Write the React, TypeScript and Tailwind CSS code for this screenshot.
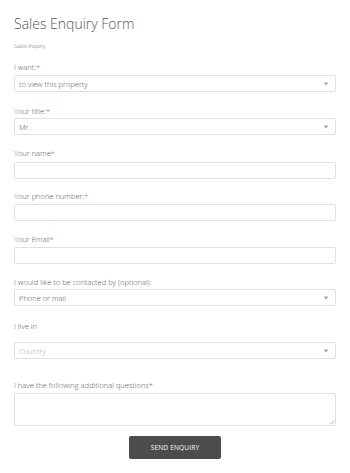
const Req = () => <span className="text-[#e0393e]">*</span>;

function Arrow() {
  return (
    <svg width="6" height="4" viewBox="0 0 6 4" className="shrink-0">
      <path d="M0.5 0.5 H5.5 L3 3.5 Z" fill="#a8a8a8" />
    </svg>
  );
}

function SelectBox({ value, placeholder }: { value: string; placeholder?: boolean }) {
  return (
    <div className="flex h-[17px] items-center justify-between rounded-[2px] border border-[#e0e0e0] bg-white pl-[4px] pr-[6px]">
      <span className={placeholder ? "text-[#ababab]" : "text-[#555]"}>{value}</span>
      <Arrow />
    </div>
  );
}

function InputBox() {
  return <div className="h-[17px] rounded-[2px] border border-[#e0e0e0] bg-white" />;
}

export default function App() {
  return (
    <div
      className="min-h-[473px] w-[350px] bg-white px-[14px] text-[7.5px] leading-[10px] text-[#555] font-light"
      style={{ fontFamily: '"Open Sans", "Liberation Sans", sans-serif' }}
    >
      <h1 className="pt-[14px] text-[14px] leading-[20px] text-[#555] font-light">Sales Enquiry Form</h1>
      <div className="mt-[8px] text-[5.5px] leading-[8px] text-[#555]">Sales Inquiry</div>

      <div className="mt-[12px]">
        <div className="mb-[3px]">I want:<Req /></div>
        <SelectBox value="to view this property" />
      </div>

      <div className="mt-[14px]">
        <div className="mb-[2px]">Your title:<Req /></div>
        <SelectBox value="Mr." />
      </div>

      <div className="mt-[13px]">
        <div className="mb-[4px]">Your name<Req /></div>
        <InputBox />
      </div>

      <div className="mt-[12px]">
        <div className="mb-[3px]">Your phone number:<Req /></div>
        <InputBox />
      </div>

      <div className="mt-[13px]">
        <div className="mb-[3px]">Your Email<Req /></div>
        <InputBox />
      </div>

      <div className="mt-[13px]">
        <div className="mb-[2px]">I would like to be contacted by (optional):</div>
        <SelectBox value="Phone or mail" />
      </div>

      <div className="mt-[15px]">
        <div className="mb-[11px]">I live in</div>
        <SelectBox value="Country" placeholder />
      </div>

      <div className="mt-[21px]">
        <div className="mb-[3px]">I have the following additional questions*</div>
        <div className="relative h-[33px] rounded-[2px] border border-[#e0e0e0] bg-white">
          <svg width="5" height="5" viewBox="0 0 5 5" className="absolute bottom-[1px] right-[1px]">
            <path d="M1 5 L5 1 M3 5 L5 3" stroke="#b5b5b5" strokeWidth="0.7" />
          </svg>
        </div>
      </div>

      <div className="mt-[10px] flex justify-center">
        <button className="h-[23px] w-[92px] rounded-[2px] bg-[#4c4c4c] text-[6.5px] font-normal tracking-[0.2px] text-white">
          SEND ENQUIRY
        </button>
      </div>
    </div>
  );
}
